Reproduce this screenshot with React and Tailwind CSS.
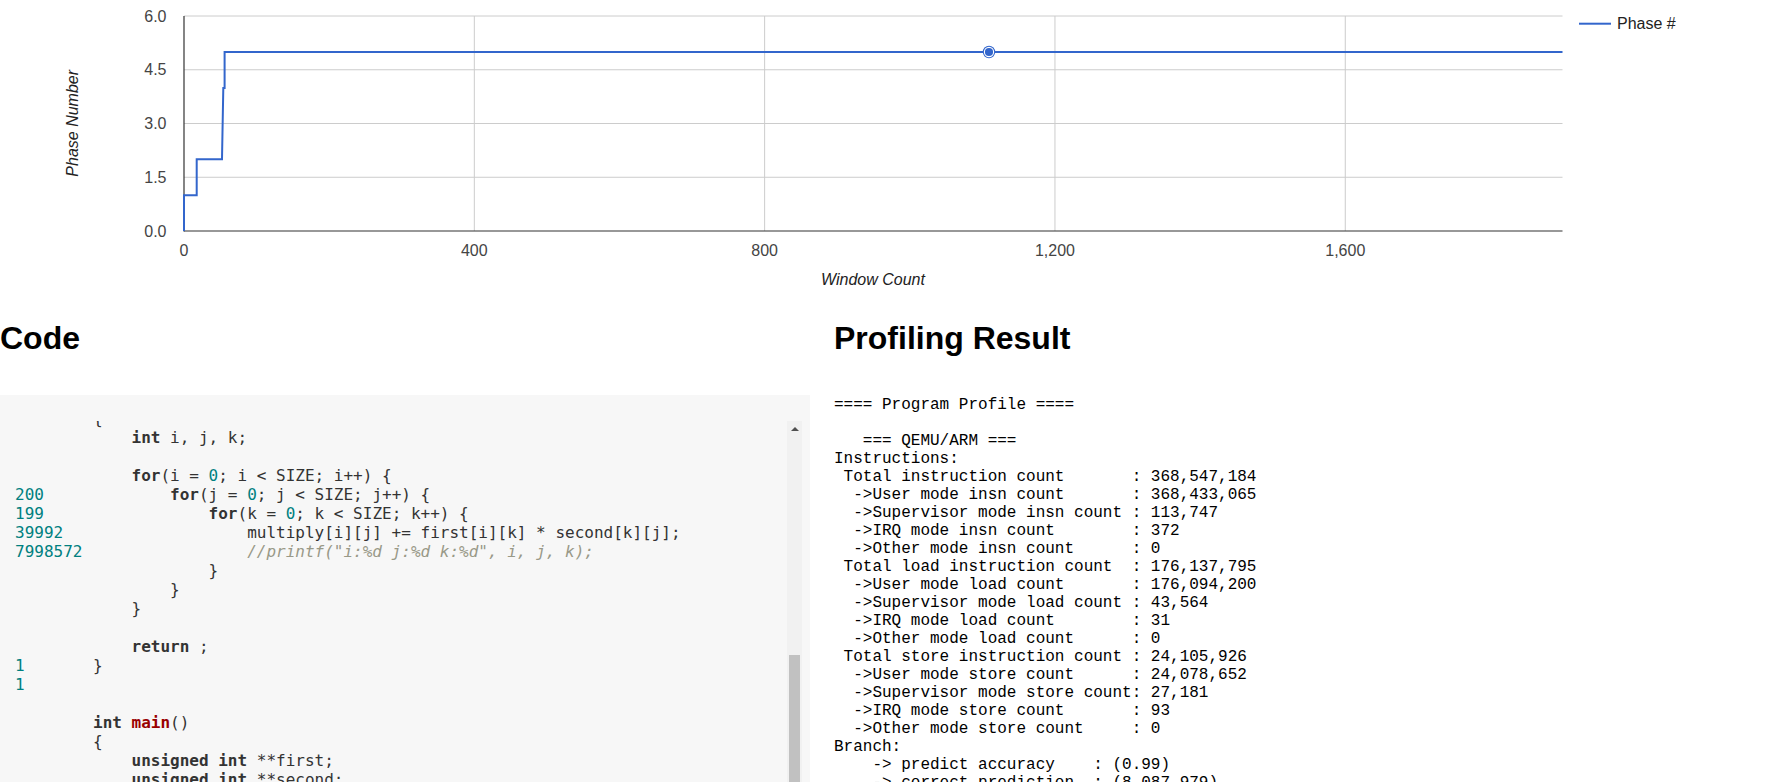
import React from "react";

const FONT = "Liberation Sans, Arial, sans-serif";

function Chart() {
  const xs = (v) => 184 + v * 0.7258;
  const ys = (v) => 231 - v * 35.833;
  const hGrid = [1.5, 3, 4.5, 6];
  const vGrid = [400, 800, 1200, 1600];
  const yLabels = [
    ["6.0", 6],
    ["4.5", 4.5],
    ["3.0", 3],
    ["1.5", 1.5],
    ["0.0", 0],
  ];
  const xLabels = [
    ["0", 0],
    ["400", 400],
    ["800", 800],
    ["1,200", 1200],
    ["1,600", 1600],
  ];
  return (
    <svg width="1765" height="320" className="block" style={{ fontFamily: FONT }}>
      {hGrid.map((v) => (
        <line key={v} x1="184" x2="1562.5" y1={ys(v)} y2={ys(v)} stroke="#cccccc" strokeWidth="1" />
      ))}
      {vGrid.map((v) => (
        <line key={v} x1={xs(v)} x2={xs(v)} y1="16" y2="231" stroke="#cccccc" strokeWidth="1" />
      ))}
      <line x1="184" x2="184" y1="16" y2="231.5" stroke="#333333" strokeWidth="1.2" />
      <line x1="184" x2="1562.5" y1="231" y2="231" stroke="#333333" strokeWidth="1.2" />
      <path
        d="M184 231 V195.2 H196.7 V159.3 H222 L223.3 88 H224.6 V52 H1562.5"
        fill="none"
        stroke="#3366cc"
        strokeWidth="2"
      />
      <circle cx="989" cy="52" r="6.2" fill="#3366cc" />
      <circle cx="989" cy="52" r="4.6" fill="#3366cc" stroke="#ffffff" strokeWidth="1.1" />
      {yLabels.map(([t, v]) => (
        <text key={t} x="166.5" y={ys(v) + 5.6} textAnchor="end" fontSize="16" fill="#444444">
          {t}
        </text>
      ))}
      {xLabels.map(([t, v]) => (
        <text key={t} x={xs(v)} y="256" textAnchor="middle" fontSize="16" fill="#444444">
          {t}
        </text>
      ))}
      <text x="873" y="284.5" textAnchor="middle" fontSize="16" fontStyle="italic" fill="#222222">
        Window Count
      </text>
      <text
        x="78.5"
        y="123.3"
        textAnchor="middle"
        fontSize="16"
        fontStyle="italic"
        fill="#222222"
        transform="rotate(-90 78.5 123.3)"
      >
        Phase Number
      </text>
      <line x1="1579" x2="1611" y1="23.7" y2="23.7" stroke="#3366cc" strokeWidth="2" />
      <text x="1617" y="29.4" fontSize="16" fill="#222222">
        Phase #
      </text>
    </svg>
  );
}

const K = (t) => ["k", t];
const N = (t) => ["n", t];
const C = (t) => ["c", t];
const T = (t) => ["t", t];
const P = (t) => ["p", t];

const codeLines = [
  ["", [P("{")]],
  ["", [P("    "), K("int"), P(" i, j, k;")]],
  ["", []],
  ["", [P("    "), K("for"), P("(i = "), N("0"), P("; i < SIZE; i++) {")]],
  ["200", [P("        "), K("for"), P("(j = "), N("0"), P("; j < SIZE; j++) {")]],
  ["199", [P("            "), K("for"), P("(k = "), N("0"), P("; k < SIZE; k++) {")]],
  ["39992", [P("                multiply[i][j] += first[i][k] * second[k][j];")]],
  ["7998572", [P("                "), C('//printf("i:%d j:%d k:%d", i, j, k);')]],
  ["", [P("            }")]],
  ["", [P("        }")]],
  ["", [P("    }")]],
  ["", []],
  ["", [P("    "), K("return"), P(" ;")]],
  ["1", [P("}")]],
  ["1", []],
  ["", []],
  ["", [K("int"), P(" "), T("main"), P("()")]],
  ["", [P("{")]],
  ["", [P("    "), K("unsigned"), P(" "), K("int"), P(" **first;")]],
  ["", [P("    "), K("unsigned"), P(" "), K("int"), P(" **second;")]],
  ["", [P("    "), K("unsigned"), P(" "), K("int"), P(" **multiply;")]],
  ["", [P("    "), K("unsigned"), P(" "), K("int"), P(" i, j;")]],
];

function Seg({ s }) {
  const [type, text] = s;
  if (type === "k") return <span className="font-bold text-[#333333]">{text}</span>;
  if (type === "n") return <span className="text-[#008080]">{text}</span>;
  if (type === "c") return <span className="italic text-[#999988]">{text}</span>;
  if (type === "t") return <span className="font-bold text-[#990000]">{text}</span>;
  return <span>{text}</span>;
}

const profile = `==== Program Profile ====

   === QEMU/ARM ===
Instructions:
 Total instruction count       : 368,547,184
  ->User mode insn count       : 368,433,065
  ->Supervisor mode insn count : 113,747
  ->IRQ mode insn count        : 372
  ->Other mode insn count      : 0
 Total load instruction count  : 176,137,795
  ->User mode load count       : 176,094,200
  ->Supervisor mode load count : 43,564
  ->IRQ mode load count        : 31
  ->Other mode load count      : 0
 Total store instruction count : 24,105,926
  ->User mode store count      : 24,078,652
  ->Supervisor mode store count: 27,181
  ->IRQ mode store count       : 93
  ->Other mode store count     : 0
Branch:
    -> predict accuracy    : (0.99)
    -> correct prediction  : (8,087,979)`;

export default function App() {
  return (
    <div className="w-full h-[782px] overflow-hidden bg-white font-['Liberation_Sans',Arial,sans-serif]">
      <Chart />
      <div className="flex">
        <div className="w-[810px] shrink-0">
          <h1 className="text-[32px] leading-[37px] font-bold text-black">Code</h1>
          <div className="mt-[38px] bg-[#f7f7f7] pt-[26px] pr-[8px] h-[420px] flex">
            <div className="flex-1 h-[400px] overflow-hidden">
              <div className="-mt-[12px] pl-[15px] font-['DejaVu_Sans_Mono',monospace] text-[16px] leading-[19px] text-[#333333]">
                {codeLines.map(([count, segs], i) => (
                  <div key={i} className="flex h-[19px] whitespace-pre">
                    <div className="w-[78px] shrink-0 text-[#008080]">{count}</div>
                    <div>
                      {segs.map((s, j) => (
                        <Seg key={j} s={s} />
                      ))}
                    </div>
                  </div>
                ))}
              </div>
            </div>
            <div className="relative w-[15px] h-[400px] bg-[#f1f1f1] shrink-0">
              <div className="absolute left-[3.5px] top-[6px] w-0 h-0 border-l-[4px] border-r-[4px] border-b-[4px] border-l-transparent border-r-transparent border-b-[#505050]" />
              <div className="absolute left-[2px] top-[234px] w-[11px] h-[200px] bg-[#c1c1c1]" />
            </div>
          </div>
        </div>
        <div className="ml-[24px] flex-1">
          <h1 className="text-[32px] leading-[37px] font-bold text-black">Profiling Result</h1>
          <pre className="mt-[39px] font-['Liberation_Mono',monospace] text-[16px] leading-[18px] text-black whitespace-pre">
            {profile}
          </pre>
        </div>
      </div>
    </div>
  );
}
